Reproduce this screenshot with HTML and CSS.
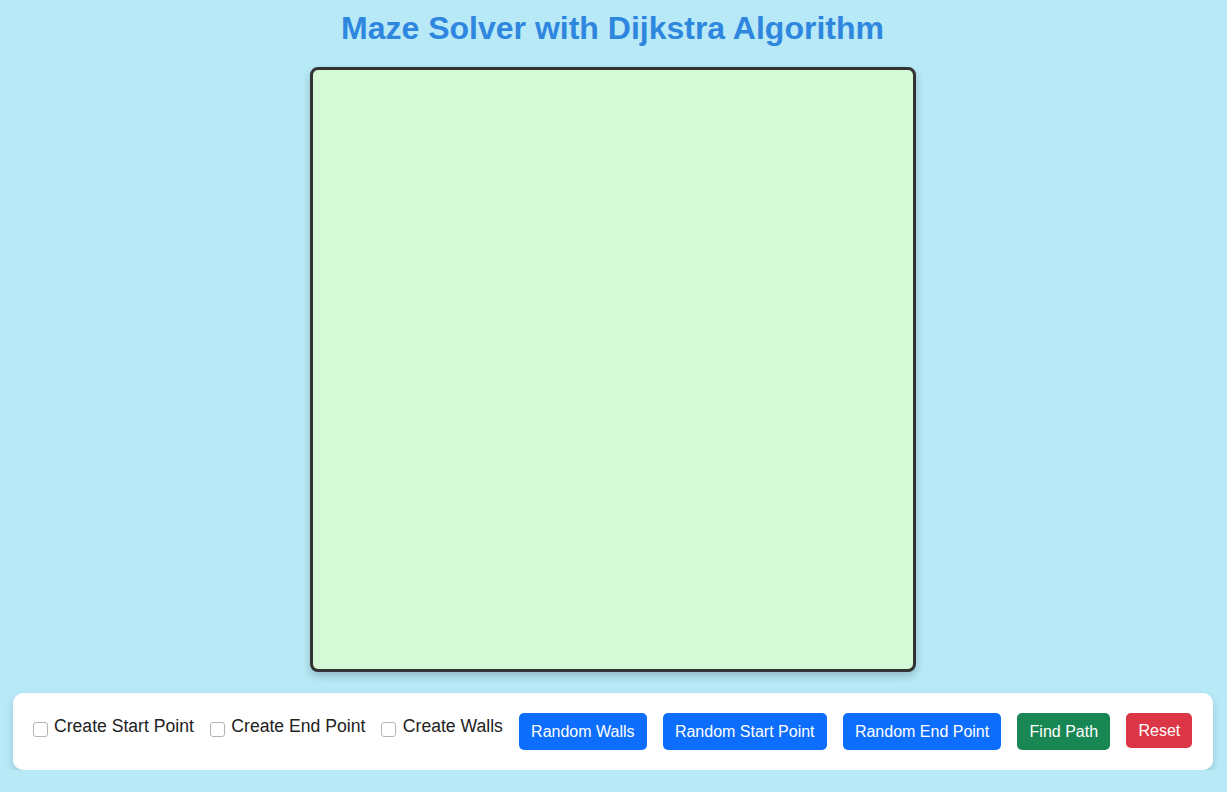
FILE: index.html
```html
<!DOCTYPE html>
<html lang="en">
<head>
<meta charset="utf-8">
<title>Maze Solver with Dijkstra Algorithm</title>
<link rel="stylesheet" href="styles.css">
</head>
<body>
<div class="page">
  <h1 class="title">Maze Solver with Dijkstra Algorithm</h1>
  <div class="maze"></div>
  <div class="controls">
    <label class="check"><input type="checkbox"><span>Create Start Point</span></label>
    <label class="check"><input type="checkbox"><span>Create End Point</span></label>
    <label class="check"><input type="checkbox"><span>Create Walls</span></label>
    <button class="btn btn-blue">Random Walls</button>
    <button class="btn btn-blue">Random Start Point</button>
    <button class="btn btn-blue">Random End Point</button>
    <button class="btn btn-green">Find Path</button>
    <button class="btn btn-red">Reset</button>
  </div>
</div>
</body>
</html>
```

FILE: styles.css
```css
html, body {
  margin: 0;
  padding: 0;
  background: #b8e9f7;
  font-family: "Liberation Sans", Arial, sans-serif;
}
.page {
  display: flex;
  flex-direction: column;
  align-items: center;
  padding-right: 2px;
}
.title {
  margin: 10px 0 20px;
  font-size: 32px;
  line-height: 37px;
  font-weight: bold;
  color: #2e86de;
}
.maze {
  width: 600px;
  height: 599px;
  background: #d5f8d6;
  border: 3px solid #333;
  border-radius: 8px;
  box-shadow: 0 4px 8px rgba(0, 0, 0, 0.2);
}
.controls {
  box-sizing: border-box;
  width: 1200px;
  margin-top: 21px;
  padding: 20px;
  background: #fff;
  border-radius: 10px;
  box-shadow: 0 4px 8px rgba(0, 0, 0, 0.15);
  display: flex;
  align-items: flex-start;
  gap: 16px;
}
.check {
  flex-shrink: 0;
  white-space: nowrap;
  margin-top: 3px;
  display: flex;
  align-items: flex-start;
  gap: 6.5px;
  font-size: 17.6px;
  line-height: 20px;
  color: #222;
}
.check input {
  appearance: none;
  -webkit-appearance: none;
  box-sizing: border-box;
  margin: 6px 0 0 0;
  width: 15px;
  height: 15px;
  border: 1px solid #b4b4b4;
  border-radius: 3px;
  background: #fff;
}
.btn {
  flex-shrink: 0;
  white-space: nowrap;
  font-family: "Liberation Sans", Arial, sans-serif;
  font-size: 16px;
  line-height: 25px;
  padding: 6px 12.2px;
  border: none;
  border-radius: 5px;
  color: #fff;
  cursor: pointer;
}
.btn-blue { background: #0d6efd; }
.btn-green { background: #198754; }
.btn-red {
  background: #dc3545;
  line-height: 23px;
}
```
